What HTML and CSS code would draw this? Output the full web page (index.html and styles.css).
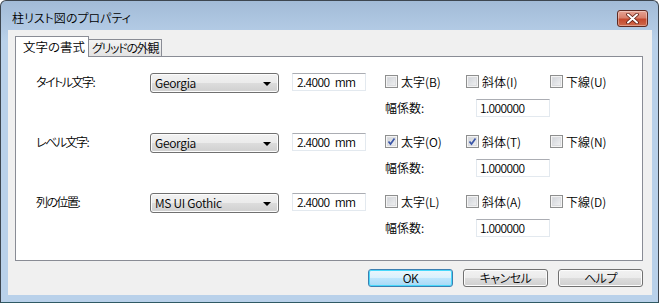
FILE: index.html
```html
<!DOCTYPE html>
<html lang="ja">
<head>
<meta charset="utf-8">
<title>柱リスト図のプロパティ</title>
<link rel="stylesheet" href="styles.css">
</head>
<body>
<div class="window">
  <div class="titlebar">
    <span class="title">柱リスト図のプロパティ</span>
    <div class="close">
      <svg width="13" height="11" viewBox="0 0 13 11"><path d="M2 1.5 L11 9.5 M11 1.5 L2 9.5" stroke="#5a1a10" stroke-width="3.6" stroke-linecap="round"/><path d="M2 1.5 L11 9.5 M11 1.5 L2 9.5" stroke="#ffffff" stroke-width="2" stroke-linecap="round"/></svg>
    </div>
  </div>
  <div class="client">
    <div class="tabs">
      <div class="tab active">文字の書式</div>
      <div class="tab">グリッドの外観</div>
    </div>
    <div class="panel">
      <div class="row">
        <div class="label">タイトル文字:</div>
        <div class="combo"><span>Georgia</span><i class="arrow"></i></div>
        <div class="field">2.4000 mm</div>
        <div class="opts">
          <div class="checks">
            <label class="chk w1"><span class="box"></span>太字(B)</label>
            <label class="chk w2"><span class="box"></span>斜体(I)</label>
            <label class="chk"><span class="box"></span>下線(U)</label>
          </div>
          <div class="scale"><span class="scale-label">幅係数:</span><div class="num">1.000000</div></div>
        </div>
      </div>
      <div class="row">
        <div class="label">レベル文字:</div>
        <div class="combo"><span>Georgia</span><i class="arrow"></i></div>
        <div class="field">2.4000 mm</div>
        <div class="opts">
          <div class="checks">
            <label class="chk w1"><span class="box on"><svg width="9" height="9" viewBox="0 0 9 9"><path d="M1.5 4.5 L3.5 7 L7.5 1.5" fill="none" stroke="#3b56a8" stroke-width="1.7"/></svg></span>太字(O)</label>
            <label class="chk w2"><span class="box on"><svg width="9" height="9" viewBox="0 0 9 9"><path d="M1.5 4.5 L3.5 7 L7.5 1.5" fill="none" stroke="#3b56a8" stroke-width="1.7"/></svg></span>斜体(T)</label>
            <label class="chk"><span class="box"></span>下線(N)</label>
          </div>
          <div class="scale"><span class="scale-label">幅係数:</span><div class="num">1.000000</div></div>
        </div>
      </div>
      <div class="row">
        <div class="label">列の位置:</div>
        <div class="combo"><span>MS UI Gothic</span><i class="arrow"></i></div>
        <div class="field">2.4000 mm</div>
        <div class="opts">
          <div class="checks">
            <label class="chk w1"><span class="box"></span>太字(L)</label>
            <label class="chk w2"><span class="box"></span>斜体(A)</label>
            <label class="chk"><span class="box"></span>下線(D)</label>
          </div>
          <div class="scale"><span class="scale-label">幅係数:</span><div class="num">1.000000</div></div>
        </div>
      </div>
    </div>
    <div class="buttons">
      <div class="btn default">OK</div>
      <div class="btn">キャンセル</div>
      <div class="btn">ヘルプ</div>
    </div>
  </div>
</div>
</body>
</html>
```

FILE: styles.css
```css
* { box-sizing: border-box; }
html, body { margin: 0; padding: 0; }
body {
  width: 659px;
  height: 303px;
  overflow: hidden;
  background: #ffffff;
  font-family: "Noto Sans CJK JP", "Liberation Sans", sans-serif;
  font-size: 12px;
  font-weight: 350;
  font-feature-settings: "palt";
  color: #000;
}
.window {
  width: 659px;
  height: 303px;
  border: 1px solid #3d4650;
  border-bottom-color: #2f5a64;
  border-radius: 6px 6px 0 0;
  background: linear-gradient(#a2bbd7 0px, #b3cbe5 30px, #b9d1ea 40px, #b9d1ea 100%);
  padding: 0 6px 7px 7px;
  display: flex;
  flex-direction: column;
}
.titlebar {
  height: 29px;
  display: flex;
  justify-content: space-between;
  align-items: flex-start;
}
.title {
  margin-left: 4px;
  margin-top: 8px;
  line-height: 17px;
  color: #000;
  white-space: nowrap;
}
.close {
  width: 31px;
  height: 17px;
  margin-top: 9px;
  margin-right: 4px;
  border: 1px solid #5e2a22;
  border-radius: 3px;
  background: linear-gradient(#e6a394 0%, #d8806c 45%, #c5492e 55%, #cf6a4c 100%);
  display: flex;
  align-items: center;
  justify-content: center;
  box-shadow: inset 0 0 0 1px rgba(255,255,255,0.35);
}
.close svg { display: block; }
.client {
  flex: 1;
  background: #f0f0f0;
  padding: 6px 9px 0 7px;
  display: flex;
  flex-direction: column;
}
.tabs {
  display: flex;
  height: 20px;
  align-items: flex-start;
}
.tab {
  border: 1px solid #898c95;
  line-height: 15px;
  white-space: nowrap;
  overflow: hidden;
}
.tab.active {
  width: 74px;
  height: 21px;
  border-bottom: none;
  background: #ffffff;
  padding: 2px 0 0 7px;
  position: relative;
  z-index: 2;
  font-size: 12.5px;
}
.tab:not(.active) {
  width: 73px;
  height: 17px;
  margin-top: 3px;
  border-left: none;
  border-bottom: none;
  background: linear-gradient(#f3f3f3, #e3e3e3);
  padding: 0 0 0 3px;
  letter-spacing: -1.3px;
}
.panel {
  height: 205px;
  border: 1px solid #898c95;
  background: #ffffff;
  padding: 16px 0 0 20px;
  position: relative;
  z-index: 1;
}
.row {
  display: flex;
  align-items: flex-start;
  height: 60px;
}
.label {
  width: 114px;
  line-height: 17px;
  letter-spacing: -1.5px;
  white-space: nowrap;
}
.combo {
  width: 129px;
  height: 20px;
  margin-right: 13px;
  border: 1px solid #707070;
  border-radius: 3px;
  background: linear-gradient(#f2f2f2 0%, #ebebeb 50%, #dddddd 50%, #cfcfcf 100%);
  box-shadow: inset 0 0 0 1px #fcfcfc;
  display: flex;
  align-items: center;
  justify-content: space-between;
  padding: 0 7px 0 4px;
  line-height: 16px;
  letter-spacing: -0.3px;
}
.arrow {
  width: 0;
  height: 0;
  border-left: 4px solid transparent;
  border-right: 4px solid transparent;
  border-top: 4px solid #000;
  margin-top: 1px;
}
.field, .num {
  width: 74px;
  height: 18px;
  border: 1px solid #e3e9ef;
  border-top-color: #abadb3;
  background: #ffffff;
  line-height: 16px;
  padding-left: 4px;
  letter-spacing: -0.6px;
  word-spacing: 3px;
  white-space: nowrap;
}
.field { margin-right: 19px; }
.num { padding-left: 3px; }
.opts {
  display: flex;
  flex-direction: column;
}
.checks {
  display: flex;
  height: 17px;
  align-items: center;
}
.chk {
  display: flex;
  align-items: center;
  gap: 3px;
  line-height: 15px;
  white-space: nowrap;
}
.chk.w1 { width: 81px; }
.chk.w2 { width: 84px; }
.box {
  width: 13px;
  height: 13px;
  flex: none;
  border: 1px solid #8e8f8f;
  background: linear-gradient(135deg, #cbcfd5 0%, #f6f6f6 100%);
  box-shadow: inset 0 0 0 1px #f4f4f4, inset 0 0 0 2px #dcdde0;
  display: flex;
  align-items: center;
  justify-content: center;
}
.box svg { display: block; }
.scale {
  display: flex;
  align-items: center;
  margin-top: 9px;
}
.scale-label { width: 91px; margin-top: -2px; }
.buttons {
  display: flex;
  justify-content: flex-end;
  gap: 10px;
  margin-top: 8px;
}
.btn {
  width: 85px;
  height: 18px;
  border: 1px solid #707070;
  border-radius: 3px;
  background: linear-gradient(#f2f2f2 0%, #ebebeb 50%, #dddddd 50%, #cfcfcf 100%);
  box-shadow: inset 0 0 0 1px #fcfcfc;
  display: flex;
  align-items: center;
  justify-content: center;
  line-height: 16px;
  letter-spacing: -0.5px;
}
.btn.default {
  border-color: #3c7fb1;
  background: linear-gradient(#eaf6fd 0%, #d9f0fc 50%, #bee6fd 50%, #a7d9f5 100%);
  box-shadow: inset 0 0 0 1px #48d8fb;
}
```
